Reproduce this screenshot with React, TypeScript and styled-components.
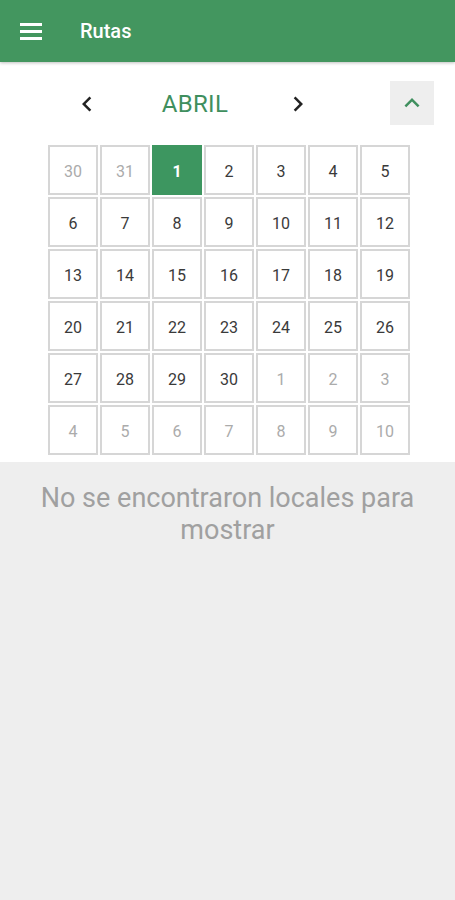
import React from 'react';
import styled, { createGlobalStyle } from 'styled-components';

const GlobalStyle = createGlobalStyle`
  html, body {
    margin: 0;
    padding: 0;
    background-color: #eeeeee;
    font-family: Roboto, "Noto Sans", "Liberation Sans", sans-serif;
  }
`;

const Page = styled.div`
  min-height: 100vh;
  background-color: #eeeeee;
`;

const AppBar = styled.header`
  height: 62px;
  display: flex;
  align-items: center;
  background-color: #43965f;
  box-shadow: 0 1px 3px rgba(0, 0, 0, 0.25);
  position: relative;
  z-index: 1;
`;

const MenuButton = styled.div`
  width: 22px;
  margin-left: 20px;
  display: flex;
  flex-direction: column;
  gap: 4px;
`;

const MenuLine = styled.span`
  display: block;
  height: 3px;
  background-color: #ffffff;
`;

const Title = styled.h1`
  margin: 0 0 0 38px;
  font-size: 20px;
  font-weight: 500;
  color: #ffffff;
`;

const CalendarPanel = styled.section`
  background-color: #ffffff;
  padding-bottom: 7px;
`;

const MonthRow = styled.div`
  height: 83px;
  display: flex;
  align-items: center;
  padding-left: 67px;
  padding-right: 21px;
`;

const NavButton = styled.div<{ $width: number }>`
  width: ${(p) => p.$width}px;
  height: 44px;
  display: flex;
  align-items: center;
  justify-content: center;
  color: #222222;
`;

const MonthName = styled.div`
  width: 176px;
  text-align: center;
  font-size: 24px;
  color: #3f8f5e;
  letter-spacing: 0.3px;
`;

const Spacer = styled.div`
  flex: 1;
`;

const CollapseButton = styled.div`
  width: 44px;
  height: 44px;
  margin-top: -2px;
  display: flex;
  align-items: center;
  justify-content: center;
  background-color: #eeeeee;
  color: #3f8f5e;
`;

const Grid = styled.div`
  display: grid;
  grid-template-columns: repeat(7, 50px);
  grid-auto-rows: 50px;
  gap: 2px;
  padding-left: 48px;
`;

const Day = styled.div<{ $muted?: boolean; $selected?: boolean }>`
  box-sizing: border-box;
  display: flex;
  align-items: center;
  justify-content: center;
  padding-top: 2px;
  font-size: 16px;
  border: 2px solid ${(p) => (p.$selected ? '#3d9660' : '#d6d6d6')};
  background-color: ${(p) => (p.$selected ? '#3d9660' : '#ffffff')};
  color: ${(p) => (p.$selected ? '#ffffff' : p.$muted ? '#ababab' : '#3a3a3a')};
  font-weight: ${(p) => (p.$selected ? 700 : 400)};
`;

const EmptyMessage = styled.p`
  margin: 0;
  padding: 20px 20px 0;
  text-align: center;
  font-size: 27px;
  line-height: 32px;
  color: #a0a0a0;
`;

const ChevronLeft = () => (
  <svg width="30" height="30" viewBox="0 0 24 24" fill="currentColor">
    <path d="M15.41 7.41L14 6l-6 6 6 6 1.41-1.41L10.83 12z" />
  </svg>
);

const ChevronRight = () => (
  <svg width="30" height="30" viewBox="0 0 24 24" fill="currentColor">
    <path d="M8.59 16.59L13.17 12 8.59 7.41 10 6l6 6-6 6z" />
  </svg>
);

const ChevronUp = () => (
  <svg width="30" height="30" viewBox="0 0 24 24" fill="currentColor">
    <path d="M12 8l-6 6 1.41 1.41L12 10.83l4.59 4.58L18 14z" />
  </svg>
);

type Cell = { n: number; muted?: boolean; selected?: boolean };

const buildDays = (): Cell[] => {
  const days: Cell[] = [{ n: 30, muted: true }, { n: 31, muted: true }];
  for (let i = 1; i <= 30; i++) days.push({ n: i, selected: i === 1 });
  for (let i = 1; i <= 10; i++) days.push({ n: i, muted: true });
  return days;
};

const App = () => {
  const days = buildDays();
  return (
    <Page>
      <GlobalStyle />
      <AppBar>
        <MenuButton>
          <MenuLine />
          <MenuLine />
          <MenuLine />
        </MenuButton>
        <Title>Rutas</Title>
      </AppBar>
      <CalendarPanel>
        <MonthRow>
          <NavButton $width={40}>
            <ChevronLeft />
          </NavButton>
          <MonthName>ABRIL</MonthName>
          <NavButton $width={30}>
            <ChevronRight />
          </NavButton>
          <Spacer />
          <CollapseButton>
            <ChevronUp />
          </CollapseButton>
        </MonthRow>
        <Grid>
          {days.map((d, idx) => (
            <Day key={String(idx)} $muted={d.muted} $selected={d.selected}>
              {d.n}
            </Day>
          ))}
        </Grid>
      </CalendarPanel>
      <EmptyMessage>No se encontraron locales para mostrar</EmptyMessage>
    </Page>
  );
};

export default App;
